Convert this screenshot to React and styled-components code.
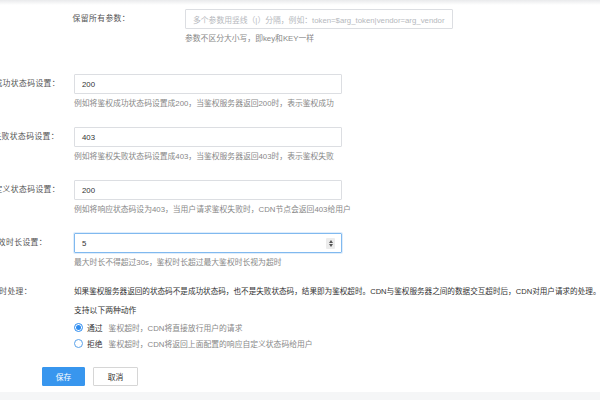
import React from "react";
import styled, { createGlobalStyle } from "styled-components";

const Global = createGlobalStyle`
  html, body { margin: 0; padding: 0; background: #fff; }
  body { width: 600px; height: 400px; overflow: hidden; }
  #root { width: 600px; height: 400px; overflow: hidden; }
  * { box-sizing: border-box; }
`;

const Page = styled.div`
  width: 600px;
  height: 400px;
  overflow: hidden;
  position: relative;
  font-family: "Liberation Sans", "Noto Sans CJK SC", sans-serif;
  font-size: 7.8px;
  color: #333;
  display: flex;
  flex-direction: column;
`;

const TopShade = styled.div`
  height: 5px;
  flex: none;
  background: linear-gradient(#e9eaec, rgba(255, 255, 255, 0));
`;

const Form = styled.div`
  flex: 1;
  padding-top: 4px;
`;

const Item = styled.div`
  display: flex;
  align-items: flex-start;
  margin-bottom: ${(p) => p.$mb ?? 17}px;
  margin-top: ${(p) => p.$mt ?? 0}px;
`;

const Label = styled.div`
  flex: none;
  width: ${(p) => p.$w}px;
  margin-right: ${(p) => p.$gap}px;
  display: flex;
  justify-content: flex-end;
  white-space: nowrap;
  color: #555;
  letter-spacing: 0.4px;
  line-height: ${(p) => p.$lh ?? 20}px;
`;

const Field = styled.div`
  flex: none;
  display: flex;
  flex-direction: column;
`;

const Input = styled.div`
  width: 268px;
  height: 20px;
  border: 1px solid ${(p) => (p.$focus ? "#80b9ef" : "#dcdee2")};
  border-radius: 1px;
  display: flex;
  align-items: center;
  justify-content: space-between;
  padding: 0 6px 0 7px;
  color: ${(p) => (p.$placeholder ? "#b5b8bd" : "#333")};
  white-space: nowrap;
  box-shadow: ${(p) => (p.$focus ? "0 0 0 1px rgba(128,185,239,0.25)" : "none")};
`;

const Spinner = styled.span`
  width: 9px;
  height: 11px;
  background: #ececec;
  border-radius: 1px;
  display: flex;
  flex-direction: column;
  align-items: center;
  justify-content: center;
  gap: 1px;
`;

const Tri = styled.span`
  width: 0;
  height: 0;
  border-left: 2.5px solid transparent;
  border-right: 2.5px solid transparent;
  ${(p) =>
    p.$up
      ? "border-bottom: 3px solid #555;"
      : "border-top: 3px solid #555;"}
`;

const Help = styled.div`
  margin-top: 4px;
  line-height: 12px;
  color: #888;
  white-space: nowrap;
`;

const Text = styled.div`
  line-height: 12px;
  color: ${(p) => p.$color ?? "#333"};
  font-size: ${(p) => p.$fs ?? 7.8}px;
  white-space: nowrap;
  margin-top: ${(p) => p.$mt ?? 0}px;
`;

const RadioRow = styled.label`
  display: flex;
  align-items: center;
  height: 16px;
  white-space: nowrap;
`;

const RadioDot = styled.span`
  width: 9px;
  height: 9px;
  border-radius: 50%;
  border: 1px solid ${(p) => (p.$on ? "#2d8cf0" : "#5aa2ea")};
  display: flex;
  align-items: center;
  justify-content: center;
  margin-right: 4px;
  flex: none;
  &::after {
    content: "";
    width: 5px;
    height: 5px;
    border-radius: 50%;
    background: ${(p) => (p.$on ? "#2d8cf0" : "transparent")};
  }
`;

const RadioName = styled.span`
  color: #333;
  margin-right: 6px;
`;

const RadioDesc = styled.span`
  color: #888;
`;

const Actions = styled.div`
  display: flex;
  gap: 8px;
  padding-left: 42px;
  margin-top: 16px;
`;

const Button = styled.button`
  height: 19px;
  width: ${(p) => p.$w}px;
  padding: 0;
  border-radius: 1px;
  font-family: inherit;
  font-size: 7.8px;
  border: 1px solid ${(p) => (p.$primary ? "#3896ee" : "#d6d6d6")};
  background: ${(p) => (p.$primary ? "#3896ee" : "#fff")};
  color: ${(p) => (p.$primary ? "#fff" : "#333")};
`;

const Footer = styled.div`
  height: 8px;
  flex: none;
  background: #f5f6f7;
`;

const rows = [
  {
    label: "成功状态码设置：",
    value: "200",
    help: "例如将鉴权成功状态码设置成200，当鉴权服务器返回200时，表示鉴权成功",
    w: 60,
  },
  {
    label: "失败状态码设置：",
    value: "403",
    help: "例如将鉴权失败状态码设置成403，当鉴权服务器返回403时，表示鉴权失败",
    w: 59,
  },
  {
    label: "自定义状态码设置：",
    value: "200",
    help: "例如将响应状态码设为403，当用户请求鉴权失败时，CDN节点会返回403给用户",
    w: 60,
  },
  {
    label: "鉴权有效时长设置：",
    value: "5",
    help: "最大时长不得超过30s，鉴权时长超过最大鉴权时长视为超时",
    w: 47,
    focus: true,
  },
];

export default function App() {
  return (
    <Page>
      <Global />
      <TopShade />
      <Form>
        <Item $mb={29}>
          <Label $w={130} $gap={55}>
            <span>保留所有参数：</span>
          </Label>
          <Field>
            <Input $placeholder>
              多个参数用竖线（|）分隔，例如：token=$arg_token|vendor=arg_vendor
            </Input>
            <Help>参数不区分大小写，即key和KEY一样</Help>
          </Field>
        </Item>

        {rows.map((r) => (
          <Item key={r.label}>
            <Label $w={r.w} $gap={74 - r.w}>
              <span>{r.label}</span>
            </Label>
            <Field>
              <Input $focus={r.focus}>
                <span>{r.value}</span>
                {r.focus && (
                  <Spinner>
                    <Tri $up />
                    <Tri />
                  </Spinner>
                )}
              </Input>
              <Help>{r.help}</Help>
            </Field>
          </Item>
        ))}

        <Item $mt={2} $mb={0}>
          <Label $w={32} $gap={42} $lh={12}>
            <span>鉴权超时处理：</span>
          </Label>
          <Field>
            <Text $fs={7.6}>
              如果鉴权服务器返回的状态码不是成功状态码，也不是失败状态码，结果即为鉴权超时。CDN与鉴权服务器之间的数据交互超时后，CDN对用户请求的处理。
            </Text>
            <Text $mt={7}>支持以下两种动作</Text>
            <div style={{ marginTop: 2 }}>
              <RadioRow>
                <RadioDot $on />
                <RadioName>通过</RadioName>
                <RadioDesc>鉴权超时，CDN将直接放行用户的请求</RadioDesc>
              </RadioRow>
              <RadioRow>
                <RadioDot />
                <RadioName>拒绝</RadioName>
                <RadioDesc>鉴权超时，CDN将返回上面配置的响应自定义状态码给用户</RadioDesc>
              </RadioRow>
            </div>
          </Field>
        </Item>

        <Actions>
          <Button $primary $w={43}>保存</Button>
          <Button $w={45}>取消</Button>
        </Actions>
      </Form>
      <Footer />
    </Page>
  );
}
